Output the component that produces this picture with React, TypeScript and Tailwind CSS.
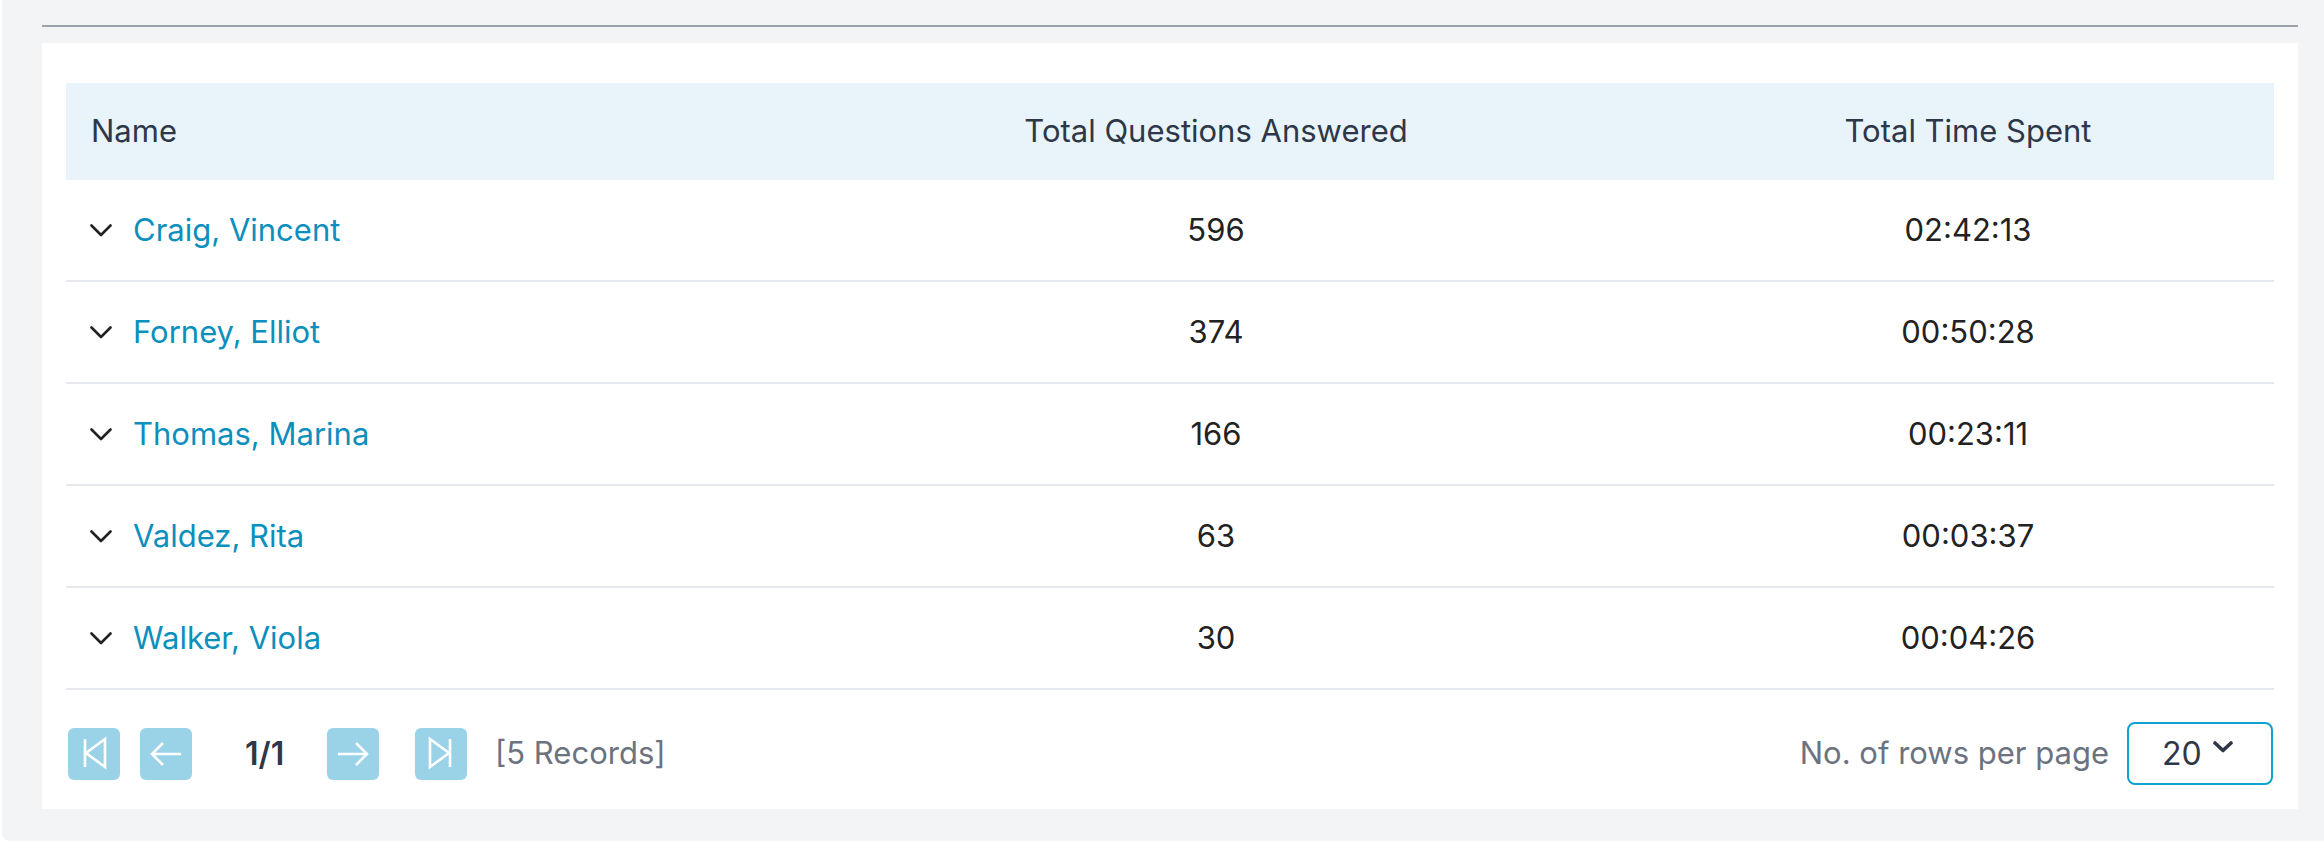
import React from "react";

const rows = [
  { name: "Craig, Vincent", q: "596", t: "02:42:13" },
  { name: "Forney, Elliot", q: "374", t: "00:50:28" },
  { name: "Thomas, Marina", q: "166", t: "00:23:11" },
  { name: "Valdez, Rita", q: "63", t: "00:03:37" },
  { name: "Walker, Viola", q: "30", t: "00:04:26" },
];

function RowChevron() {
  return (
    <svg width="22" height="13" viewBox="0 0 22 13" fill="none">
      <path d="M1.5 1.5 L11 11 L20.5 1.5" stroke="#222" strokeWidth="2.6" strokeLinecap="round" strokeLinejoin="round" />
    </svg>
  );
}

function PageBtn({ kind }: { kind: "first" | "prev" | "next" | "last" }) {
  let d = "";
  if (kind === "first") d = "M17 11 V39 M37 11 L18 25 L37 39 Z";
  if (kind === "prev") d = "M12 26 H41 M23 15 L12 26 L23 37";
  if (kind === "next") d = "M11 26 H40 M29 15 L40 26 L29 37";
  if (kind === "last") d = "M35 11 V39 M15 11 L34 25 L15 39 Z";
  return (
    <div className="w-[52px] h-[52px] rounded-[6px] bg-[#9ad3e8] flex items-center justify-center">
      <svg width="52" height="52" viewBox="0 0 52 52" fill="none">
        <path d={d} stroke="#ffffff" strokeWidth="2.6" strokeLinejoin="miter" strokeLinecap="butt" />
      </svg>
    </div>
  );
}

export default function App() {
  return (
    <div
      className="w-[2324px] h-[842px] bg-white overflow-hidden"
      style={{ fontFamily: "Inter, 'Noto Sans', 'Liberation Sans', sans-serif" }}
    >
      <div className="ml-[2px] h-[841px] bg-[#f3f4f6] rounded-bl-[8px] pl-[40px] pr-[26px] pt-[25px]">
        <div className="h-[2px] bg-[#9ca3af]" />
        <div className="mt-[16px] bg-white pt-[40px] px-[24px]">
          <div className="grid grid-cols-[704px_892px_612px] h-[97px] bg-[#e8f4f9] items-center text-[31px] text-[#2d3748]">
            <div className="pl-[25px]">Name</div>
            <div className="text-center">Total Questions Answered</div>
            <div className="text-center">Total Time Spent</div>
          </div>
          {rows.map((r) => (
            <div
              key={r.name}
              className="grid grid-cols-[704px_892px_612px] h-[102px] border-b-2 border-[#e5e9ee] items-center text-[31px]"
            >
              <div className="pl-[24px] flex items-center gap-[21px]">
                <RowChevron />
                <span className="text-[#0b8fbc]">{r.name}</span>
              </div>
              <div className="text-center text-[#222]">{r.q}</div>
              <div className="text-center text-[#222]">{r.t}</div>
            </div>
          ))}
          <div className="flex items-center justify-between pt-[32px] pb-[24px] pl-[2px] pr-[1px]">
            <div className="flex items-center">
              <PageBtn kind="first" />
              <div className="ml-[20px]">
                <PageBtn kind="prev" />
              </div>
              <div className="w-[135px] pl-[53px] text-[32px] font-semibold text-[#2d3748]">1/1</div>
              <PageBtn kind="next" />
              <div className="ml-[36px]">
                <PageBtn kind="last" />
              </div>
              <span className="ml-[28px] text-[31px] text-[#6b7280]">[5 Records]</span>
            </div>
            <div className="flex items-center gap-[18px]">
              <span className="text-[31px] text-[#6b7280]">No. of rows per page</span>
              <div className="w-[146px] h-[63px] border-2 border-[#0ea2d0] rounded-[8px] flex items-center pl-[33px]">
                <span className="text-[32px] text-[#2d3748]">20</span>
                <svg className="ml-[11px] -mt-[14px]" width="20" height="12" viewBox="0 0 20 12" fill="none">
                  <path d="M2 2 L10 9.5 L18 2" stroke="#2d3748" strokeWidth="3.6" strokeLinecap="round" strokeLinejoin="round" />
                </svg>
              </div>
            </div>
          </div>
        </div>
      </div>
    </div>
  );
}
